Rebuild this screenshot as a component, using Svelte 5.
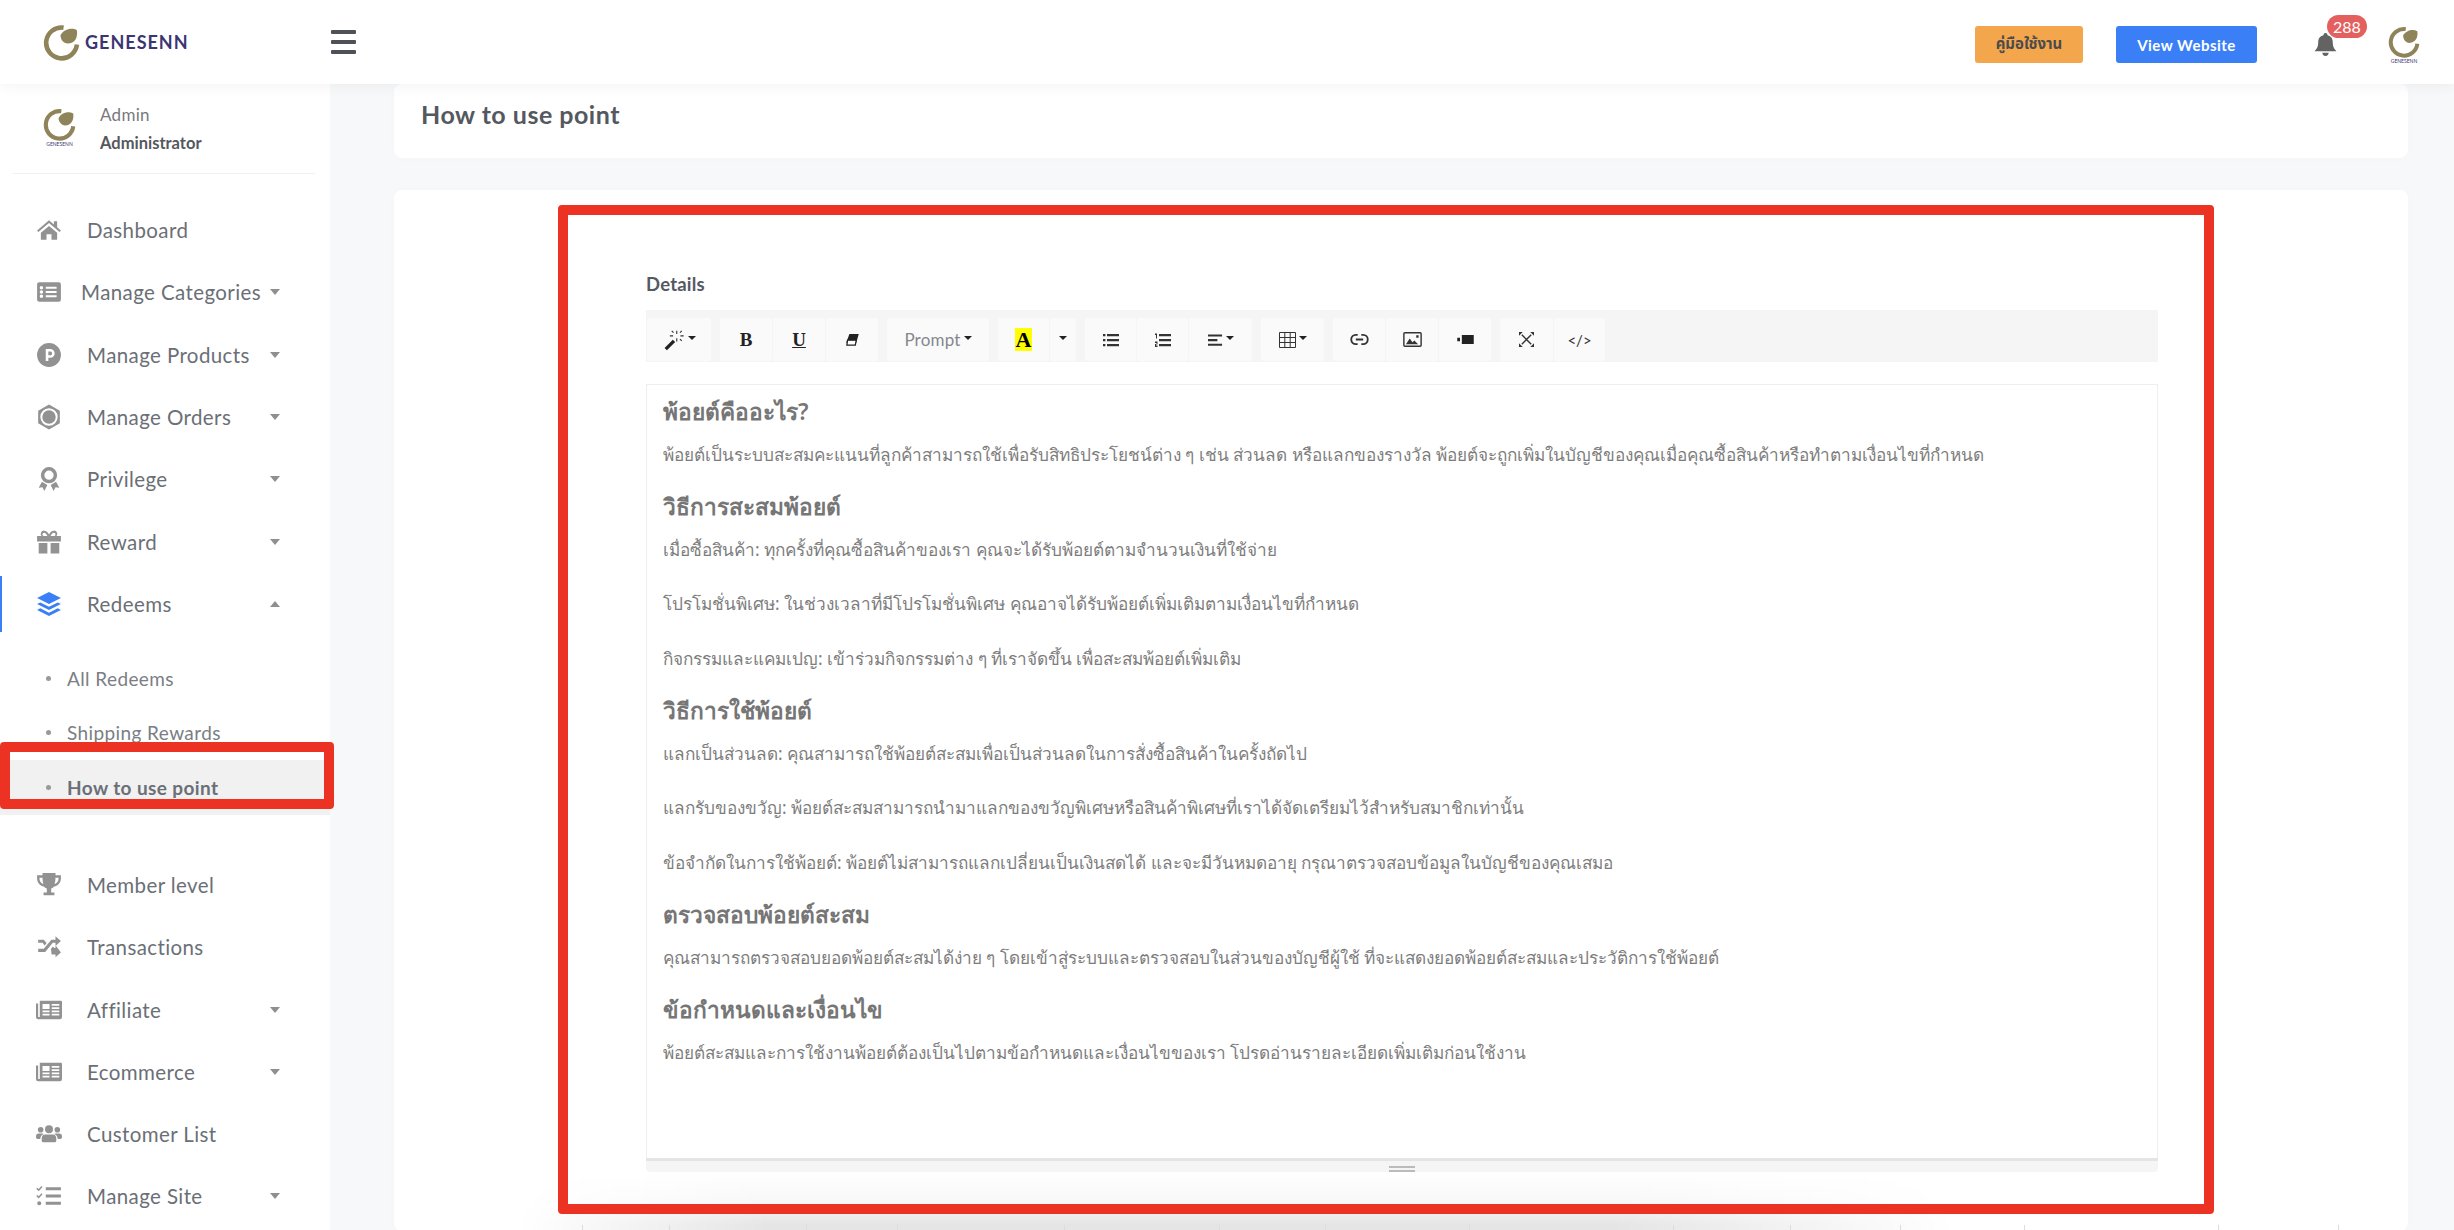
<script>
	const icons = {
		home: 'M12 3 1 12.5l1.2 1.4L12 5.6l9.8 8.3 1.2-1.4-3.5-3V4h-3v2.9zM4.5 14.6V21h5.2v-5h4.6v5h5.2v-6.4L12 8.2z',
		list: 'M3 3h18a2 2 0 0 1 2 2v14a2 2 0 0 1-2 2H3a2 2 0 0 1-2-2V5a2 2 0 0 1 2-2zm2 3.5a1.6 1.6 0 1 0 0 3.2 1.6 1.6 0 0 0 0-3.2zm4 .6v2h10v-2zM5 10.4a1.6 1.6 0 1 0 0 3.2 1.6 1.6 0 0 0 0-3.2zm4 .6v2h10v-2zm-4 3.3a1.6 1.6 0 1 0 0 3.2 1.6 1.6 0 0 0 0-3.2zm4 .6v2h10v-2z',
		point: 'M12 1a11 11 0 1 0 0 22 11 11 0 0 0 0-22zM9 6.5h4.2a4 4 0 0 1 0 8H11.400v3H9zm2.400 2.300v3.400h1.800a1.700 1.700 0 0 0 0-3.400z',
		orders: 'M12 .5 22 6.200v11.600L12 23.500 2 17.800V6.200zM12 4a8 8 0 1 0 0 16 8 8 0 0 0 0-16zm0 1.800a6.200 6.200 0 1 1 0 12.400 6.200 6.200 0 0 1 0-12.400z',
		award: 'M12 1a7.500 7.500 0 1 0 0 15 7.500 7.500 0 0 0 0-15zm0 3.200a4.300 4.300 0 1 1 0 8.600 4.300 4.300 0 0 1 0-8.600zM5.500 14.500 2.500 20l3.500-.3L7.700 23l2.800-5.500zm13 0L21.500 20l-3.500-.3-1.700 3.300-2.800-5.500z',
		gift: 'M7.500 1.500c2 0 3.500 1.500 4.500 3.500 1-2 2.500-3.500 4.500-3.500a3 3 0 0 1 2.400 5H23v5H1v-5h4.100a3 3 0 0 1 2.400-5zm0 2a1 1 0 0 0 0 3h3c-.700-1.500-1.700-3-3-3zm9 0c-1.300 0-2.300 1.500-3 3h3a1 1 0 0 0 0-3zM2.500 13h8v9.500h-8zm11 0h8v9.500h-8z',
		layers: 'M12 1 1 6.500 12 12l11-5.500zM4 10.500 1 12l11 5.500L23 12l-3-1.500-8 4zm0 5.500-3 1.500L12 23l11-5.500-3-1.500-8 4z',
		trophy: 'M6 1h12v2h5v3c0 4-3 7-6.500 7.500-.8.900-1.700 1.500-2.500 1.800V19h3v2.500H7V19h3v-3.700c-.8-.3-1.700-.900-2.500-1.800C4 13 1 10 1 6V3h5zM3.200 5.200V6c0 2.500 1.500 4.300 3.600 5-.5-1.700-.8-3.700-.8-5.800zm17.600 0H18c0 2.100-.3 4.100-.8 5.800 2.100-.7 3.600-2.500 3.600-5z',
		random: 'M18 2l5 4.500L18 11V8h-2.500l-7 8.500H2v-2.800h5.200l7-8.500H18zM2 5.200h5.200l2.600 3.200-1.800 2.200L6 8H2zm11.800 8.600 1.800-2.200 1.400 1.400h1v-2.700L23 17l-5 4.500V19h-3.600z',
		paper: 'M3.500 3.500h19.500A1 1 0 0 1 24 4.500v14a2 2 0 0 1-2 2H2a2 2 0 0 1-2-2V6h2v12.500h1.500zm2.500 3v4.500h6.500V6.500zm8.500 0V8h7V6.500zm0 3V11h7V9.500zM6 12.500V14h6.500v-1.500zm8.500 0V14h7v-1.500zM6 15.500V17h6.500v-1.500zm8.500 0V17h7v-1.500z',
		users: 'M12 4a3.700 3.700 0 1 1 0 7.400A3.700 3.700 0 0 1 12 4zM4.300 5.500a2.600 2.600 0 1 1 0 5.200 2.600 2.600 0 0 1 0-5.200zm15.400 0a2.600 2.600 0 1 1 0 5.200 2.600 2.600 0 0 1 0-5.200zM8.500 12.500h7c2 0 3.200 1.500 3.200 3.500v2.500a1 1 0 0 1-1 1H6.300a1 1 0 0 1-1-1V16c0-2 1.200-3.500 3.200-3.500zM2.500 11.500h3.300c.5 0 .9.100 1.300.4-1.800.7-3 2.200-3.200 4.600H1.500a1.500 1.500 0 0 1-1.500-1.500V14c0-1.500 1-2.500 2.500-2.500zm15.700 0h3.300c1.500 0 2.500 1 2.500 2.500v1c0 .8-.7 1.500-1.500 1.500h-2.400c-.2-2.400-1.400-3.900-3.200-4.600.4-.3.800-.4 1.300-.4z',
		tasks: 'M9 4h14v2.600H9zm0 6.700h14v2.600H9zm0 6.700h14V20H9zM1.200 4.300 2.500 5.500 5 2.800l1 .9-3.500 3.800L.2 5.300zm0 6.700 1.300 1.200L5 9.500l1 .9-3.500 3.800-2.300-2.200zM3 16.800a1.900 1.900 0 1 1 0 3.800 1.900 1.900 0 0 1 0-3.800z'
	};

	const topNav = [
		{ label: 'Dashboard', icon: 'home' },
		{ label: 'Manage Categories', icon: 'list', caret: 'down', tight: true },
		{ label: 'Manage Products', icon: 'point', caret: 'down' },
		{ label: 'Manage Orders', icon: 'orders', caret: 'down' },
		{ label: 'Privilege', icon: 'award', caret: 'down' },
		{ label: 'Reward', icon: 'gift', caret: 'down' },
		{ label: 'Redeems', icon: 'layers', caret: 'up', active: true }
	];
	const subNav = [
		{ label: 'All Redeems' },
		{ label: 'Shipping Rewards' },
		{ label: 'How to use point', current: true }
	];
	const bottomNav = [
		{ label: 'Member level', icon: 'trophy' },
		{ label: 'Transactions', icon: 'random' },
		{ label: 'Affiliate', icon: 'paper', caret: 'down' },
		{ label: 'Ecommerce', icon: 'paper', caret: 'down' },
		{ label: 'Customer List', icon: 'users' },
		{ label: 'Manage Site', icon: 'tasks', caret: 'down' }
	];

	const content = [
		{ h: 'พ้อยต์คืออะไร?' },
		{ p: 'พ้อยต์เป็นระบบสะสมคะแนนที่ลูกค้าสามารถใช้เพื่อรับสิทธิประโยชน์ต่าง ๆ เช่น ส่วนลด หรือแลกของรางวัล พ้อยต์จะถูกเพิ่มในบัญชีของคุณเมื่อคุณซื้อสินค้าหรือทำตามเงื่อนไขที่กำหนด' },
		{ h: 'วิธีการสะสมพ้อยต์' },
		{ p: 'เมื่อซื้อสินค้า: ทุกครั้งที่คุณซื้อสินค้าของเรา คุณจะได้รับพ้อยต์ตามจำนวนเงินที่ใช้จ่าย' },
		{ p: 'โปรโมชั่นพิเศษ: ในช่วงเวลาที่มีโปรโมชั่นพิเศษ คุณอาจได้รับพ้อยต์เพิ่มเติมตามเงื่อนไขที่กำหนด' },
		{ p: 'กิจกรรมและแคมเปญ: เข้าร่วมกิจกรรมต่าง ๆ ที่เราจัดขึ้น เพื่อสะสมพ้อยต์เพิ่มเติม' },
		{ h: 'วิธีการใช้พ้อยต์' },
		{ p: 'แลกเป็นส่วนลด: คุณสามารถใช้พ้อยต์สะสมเพื่อเป็นส่วนลดในการสั่งซื้อสินค้าในครั้งถัดไป' },
		{ p: 'แลกรับของขวัญ: พ้อยต์สะสมสามารถนำมาแลกของขวัญพิเศษหรือสินค้าพิเศษที่เราได้จัดเตรียมไว้สำหรับสมาชิกเท่านั้น' },
		{ p: 'ข้อจำกัดในการใช้พ้อยต์: พ้อยต์ไม่สามารถแลกเปลี่ยนเป็นเงินสดได้ และจะมีวันหมดอายุ กรุณาตรวจสอบข้อมูลในบัญชีของคุณเสมอ' },
		{ h: 'ตรวจสอบพ้อยต์สะสม' },
		{ p: 'คุณสามารถตรวจสอบยอดพ้อยต์สะสมได้ง่าย ๆ โดยเข้าสู่ระบบและตรวจสอบในส่วนของบัญชีผู้ใช้ ที่จะแสดงยอดพ้อยต์สะสมและประวัติการใช้พ้อยต์' },
		{ h: 'ข้อกำหนดและเงื่อนไข' },
		{ p: 'พ้อยต์สะสมและการใช้งานพ้อยต์ต้องเป็นไปตามข้อกำหนดและเงื่อนไขของเรา โปรดอ่านรายละเอียดเพิ่มเติมก่อนใช้งาน' }
	];

	// faint column rules of the next section peeking in under the card
	const peekRules = [582, 669, 806, 897, 1064, 1219, 1325, 1469, 1673, 1790, 1900, 2024, 2218, 2338];
</script>

{#snippet logoMark(size)}
	<svg width={size} height={size} viewBox="0 0 36 36">
		<path d="M20 3.500A15 15 0 1 0 33 20" fill="none" stroke="#8f8459" stroke-width="4.500" />
		<path d="M17 11c3-6 11-8 16-5 1 7-2 13-9 13-4 0-7-4-7-8z" fill="#8f8459" />
	</svg>
{/snippet}

{#snippet navRow(item)}
	<a class="nav-row" class:active={item.active} class:tight={item.tight}>
		<svg class="nav-icon" viewBox="0 0 24 24"><path d={icons[item.icon]} fill-rule="evenodd" /></svg>
		<span class="nav-label">{item.label}</span>
		{#if item.caret}<i class="caret {item.caret}"></i>{/if}
	</a>
{/snippet}

<div class="page">
	<header>
		<div class="brand">
			{@render logoMark(37)}
			<span class="brand-name">GENESENN</span>
		</div>
		<button class="burger" aria-label="menu"><i></i><i></i><i></i></button>
		<div class="top-right">
			<button class="btn orange">คู่มือใช้งาน</button>
			<button class="btn blue">View Website</button>
			<div class="bell">
				<svg viewBox="0 0 24 24" width="25" height="27"><path d="M12 1a2 2 0 0 1 2 2c3.500.8 5 3.500 5 7 0 5 2 6.500 3.500 8.500H1.500C3 16.500 5 15 5 10c0-3.500 1.500-6.200 5-7a2 2 0 0 1 2-2zM9 20h6a3 3 0 0 1-6 0z" fill="#636363" /></svg>
				<span class="badge">288</span>
			</div>
			<div class="mini-logo">
				{@render logoMark(32)}
				<span>GENESENN</span>
			</div>
		</div>
	</header>

	<div class="body">
		<aside>
			<div class="profile">
				<div class="mini-logo profile-logo">
					{@render logoMark(33)}
					<span>GENESENN</span>
				</div>
				<div class="who">
					<span class="who-name">Admin</span>
					<strong>Administrator</strong>
				</div>
			</div>

			<nav>
				{#each topNav as item}
					{@render navRow(item)}
				{/each}
				<div class="sub">
					{#each subNav as item}
						<a class="sub-row" class:current={item.current}><i></i>{item.label}</a>
					{/each}
				</div>
				{#each bottomNav as item}
					{@render navRow(item)}
				{/each}
			</nav>
		</aside>

		<main>
			<section class="card title-card"><h1>How to use point</h1></section>
			<section class="card form-card">
				<label for="editor">Details</label>
				<div class="toolbar">
					<div class="group"><button class="tool w64"><svg viewBox="0 0 24 24" width="22" height="22"><path d="M3 22 12 13" stroke="#222" stroke-width="3.600" /><path d="M15 2v3.500M15 10v3.500M7.500 7.500h3.500M19 7.500h3.500M9.500 2l2 2M20.500 2l-2 2M20.500 13l-2-2" stroke="#333" stroke-width="1.200" fill="none" /></svg><i class="dd"></i></button></div>
					<div class="group">
						<button class="tool serif">B</button>
						<button class="tool serif under">U</button>
						<button class="tool"><svg viewBox="0 0 24 24" width="15" height="15"><path d="M7 3h15l-4 14H2z" fill="#222" /><path d="M4 13h14l-1.500 8H3z" fill="#fff" stroke="#222" stroke-width="2" /></svg></button>
					</div>
					<div class="group"><button class="tool prompt">Prompt<i class="dd"></i></button></div>
					<div class="group">
						<button class="tool w51"><span class="hl">A</span></button>
						<button class="tool w26"><i class="dd"></i></button>
					</div>
					<div class="group">
						<button class="tool w51"><svg viewBox="0 0 16 14" width="16" height="14"><path d="M0 1h2.400v2.200H0zM4 1h12v2.200H4zM0 6h2.400v2.200H0zM4 6h12v2.200H4zM0 11h2.400v2.200H0zM4 11h12v2.200H4z" fill="#333" /></svg></button>
						<button class="tool w51"><svg viewBox="0 0 16 14" width="16" height="14"><path d="M0 .5h2v5H1V2H0zM4 1h12v2.200H4zM4 6h12v2.200H4zM0 8.500h2.500v3H1v1h1.500V14H0v-3h1.500v-1H0zM4 11h12v2.200H4z" fill="#333" /></svg></button>
						<button class="tool w63"><svg viewBox="0 0 16 14" width="15" height="14"><path d="M0 1h15v2.200H0zM0 6h10v2.200H0zM0 11h15v2.200H0z" fill="#333" /></svg><i class="dd"></i></button>
					</div>
					<div class="group"><button class="tool w63"><svg viewBox="0 0 17 16" width="17" height="16"><path d="M.5.500h16v15H.500zM5.800.5v15M11.200.5v15M.5 5.500h16M.5 10.500h16" fill="none" stroke="#333" /></svg><i class="dd"></i></button></div>
					<div class="group">
						<button class="tool"><svg viewBox="0 0 20 12" width="19" height="11"><path d="M8 1H6a5 5 0 0 0 0 10h2M12 1h2a5 5 0 0 1 0 10h-2M6 6h8" fill="none" stroke="#333" stroke-width="2" /></svg></button>
						<button class="tool"><svg viewBox="0 0 20 16" width="19" height="15"><rect x=".8" y=".8" width="18.400" height="14.400" rx="1" fill="none" stroke="#333" stroke-width="1.500" /><path d="M3 13l4-6 3 4 2-2 4 4zM14 3.500h2.500V6H14z" fill="#333" /></svg></button>
						<button class="tool"><svg viewBox="0 0 18 12" width="17" height="11"><path d="M5 1h13v10H5zM0 4h3v4H0z" fill="#222" /></svg></button>
					</div>
					<div class="group">
						<button class="tool w53"><svg viewBox="0 0 16 16" width="15" height="15"><path d="M3 3l10 10M13 3 3 13" stroke="#333" stroke-width="1.500" /><path d="M0 0h4L0 4zM16 0v4l-4-4zM0 16v-4l4 4zM16 16h-4l4-4z" fill="#333" /></svg></button>
						<button class="tool w51 code">&lt;/&gt;</button>
					</div>
				</div>
				<div class="editor" id="editor">
					{#each content as block}
						{#if block.h}<h3>{block.h}</h3>{:else}<p>{block.p}</p>{/if}
					{/each}
				</div>
				<div class="resize"><i></i><i></i></div>
			</section>
		</main>
	</div>

	<div class="scroll-shade"></div>
	{#each peekRules as x}
		<i class="peek-rule" style="left: {x}px"></i>
	{/each}
	<div class="mark mark-side"></div>
	<div class="mark mark-main"></div>
</div>

<style>
	:global(body) {
		margin: 0;
	}

	.page {
		position: relative;
		width: 2454px;
		height: 1230px;
		overflow: hidden;
		background: #f7f8fa;
		font-family: 'Lato', 'Noto Sans', 'Noto Sans Thai', sans-serif;
		color: #6b6f76;
	}

	header {
		position: relative;
		z-index: 3;
		display: flex;
		align-items: center;
		height: 84px;
		background: #fff;
		box-shadow: 0 2px 14px rgba(0, 0, 0, 0.05);
	}

	.brand {
		display: flex;
		align-items: center;
		gap: 5px;
		width: 331px;
		padding-left: 43px;
		box-sizing: border-box;
	}

	.brand-name {
		font-size: 18px;
		font-weight: 700;
		letter-spacing: 1px;
		color: #3b3672;
	}

	.burger {
		display: flex;
		flex-direction: column;
		gap: 6px;
		padding: 0;
		border: 0;
		background: none;
	}

	.burger i {
		display: block;
		width: 25px;
		height: 4px;
		border-radius: 1px;
		background: #4e5158;
	}

	.top-right {
		display: flex;
		align-items: center;
		margin-left: auto;
		padding: 5px 34px 0 0;
	}

	.btn {
		height: 37px;
		border: 0;
		border-radius: 3px;
		font-family: inherit;
		font-size: 15px;
		font-weight: 700;
	}

	.orange {
		width: 108px;
		margin-right: 33px;
		background: #f4a64d;
		color: #4b4b4b;
	}

	.blue {
		width: 141px;
		margin-right: 56px;
		background: #3a7ff6;
		color: #fff;
		letter-spacing: 0.5px;
	}

	.bell {
		position: relative;
		width: 25px;
		height: 27px;
		margin-right: 50px;
	}

	.badge {
		position: absolute;
		left: 14px;
		top: -16px;
		padding: 2px 6px;
		border-radius: 12px;
		background: #e4605f;
		color: #fff;
		font-size: 16px;
		line-height: 19px;
	}

	.mini-logo {
		display: flex;
		flex-direction: column;
		align-items: center;
	}

	.mini-logo span {
		font-size: 5px;
		line-height: 6px;
		color: #3b3672;
	}

	.body {
		display: flex;
		height: 1146px;
	}

	aside {
		flex: none;
		width: 330px;
		background: #fff;
	}

	.profile {
		display: flex;
		align-items: flex-start;
		gap: 24px;
		height: 90px;
		margin: 0 15px 0 12px;
		padding: 20px 0 0 31px;
		box-sizing: border-box;
		border-bottom: 1px solid #f1f1f1;
	}

	.profile-logo {
		padding-top: 4px;
	}

	.who {
		display: flex;
		flex-direction: column;
		gap: 8px;
		font-size: 17px;
	}

	.who-name {
		line-height: 21px;
		color: #77797e;
		letter-spacing: 0.3px;
	}

	.who strong {
		font-size: 16.500px;
		line-height: 20px;
		color: #55585e;
	}

	nav {
		padding-top: 25px;
	}

	.nav-row {
		display: flex;
		align-items: center;
		height: 62.3px;
		padding-left: 36px;
		box-sizing: border-box;
		font-size: 20.500px;
		letter-spacing: 0.4px;
		color: #6b6f76;
	}

	.nav-row.active {
		position: relative;
	}

	.nav-row.active::before {
		content: '';
		position: absolute;
		left: 0;
		top: 3px;
		bottom: 3px;
		width: 2px;
		background: #3a7ff6;
	}

	.nav-icon {
		flex: none;
		width: 26px;
		height: 26px;
		fill: #929292;
	}

	.active .nav-icon {
		fill: #3a7ff6;
	}

	.nav-label {
		margin-left: 25px;
	}

	.tight .nav-label {
		margin-left: 19px;
	}

	.caret {
		position: absolute;
		left: 270px;
		width: 0;
		height: 0;
		border-left: 5.5px solid transparent;
		border-right: 5.5px solid transparent;
	}

	.caret.down {
		border-top: 6px solid #8f8f8f;
	}

	.caret.up {
		border-bottom: 6px solid #8f8f8f;
	}

	.sub {
		padding: 16px 0 39px;
	}

	.sub-row {
		display: flex;
		align-items: center;
		gap: 16px;
		height: 54.6px;
		padding-left: 46px;
		box-sizing: border-box;
		font-size: 19px;
		letter-spacing: 0.4px;
		color: #7b7e84;
	}

	.sub-row i {
		width: 5px;
		height: 5px;
		border-radius: 50%;
		background: #999;
	}

	.sub-row.current {
		background: #f1f1f1;
		font-weight: 700;
		color: #6b6f76;
	}

	main {
		flex: 1;
		padding: 0 46px 0 64px;
	}

	.card {
		background: #fff;
		border-radius: 8px;
		box-shadow: 0 1px 8px rgba(0, 0, 0, 0.015);
	}

	.title-card {
		height: 74px;
		margin-bottom: 32px;
		padding: 15px 27px;
		box-sizing: border-box;
	}

	h1 {
		margin: 0;
		font-size: 25px;
		line-height: 30px;
		font-weight: 700;
		letter-spacing: 0.5px;
		color: #54585f;
	}

	.form-card {
		height: 1041px;
		padding: 83px 250px 0 252px;
		box-sizing: border-box;
	}

	label {
		display: block;
		height: 37px;
		font-size: 18.500px;
		line-height: 22px;
		font-weight: 700;
		letter-spacing: 0.2px;
		color: #555962;
	}

	.toolbar {
		display: flex;
		gap: 9px;
		height: 52px;
		padding: 8px 0 1px 1px;
		box-sizing: border-box;
		background: #f5f5f5;
	}

	.group {
		display: flex;
		gap: 1px;
	}

	.tool {
		display: flex;
		align-items: center;
		justify-content: center;
		gap: 3px;
		width: 52px;
		height: 43px;
		padding: 0;
		border: 0;
		border-radius: 3px;
		background: #fafafa;
		color: #222;
		font-family: inherit;
	}

	.w64 { width: 64px; }
	.w51 { width: 51px; }
	.w53 { width: 53px; }
	.w63 { width: 63px; }
	.w26 { width: 26px; }

	.serif {
		font-family: 'Liberation Serif', serif;
		font-size: 19px;
		font-weight: 700;
	}

	.under {
		text-decoration: underline;
	}

	.prompt {
		width: 102px;
		font-size: 17px;
		letter-spacing: 0.2px;
		color: #85888d;
	}

	.hl {
		padding: 2px 1px;
		background: #ff0;
		color: #000;
		font-family: 'Liberation Serif', serif;
		font-size: 22px;
		font-weight: 700;
		line-height: 19px;
	}

	.code {
		font-size: 15px;
		color: #333;
	}

	.dd {
		width: 0;
		height: 0;
		margin-bottom: 3px;
		border-left: 4px solid transparent;
		border-right: 4px solid transparent;
		border-top: 4px solid #222;
	}

	.editor {
		height: 774px;
		margin-top: 22px;
		padding: 14px 17px 0 16px;
		box-sizing: border-box;
		border: 1px solid #eee;
		border-bottom: 0;
		overflow: hidden;
		font-family: 'Noto Sans', sans-serif;
	}

	h3 {
		margin: 0 0 18px;
		font-size: 22.700px;
		line-height: 26px;
		font-weight: 600;
		color: #767676;
	}

	p {
		margin: 0 0 31.700px;
		font-size: 17.200px;
		line-height: 23px;
		color: #7d7d7d;
	}

	p:has(+ h3) {
		margin-bottom: 27.700px;
	}

	.resize {
		display: flex;
		flex-direction: column;
		align-items: center;
		gap: 2px;
		height: 14px;
		padding-top: 5px;
		box-sizing: border-box;
		border-top: 3px solid #e4e4e4;
		border-radius: 0 0 4px 4px;
		background: #f5f5f5;
	}

	.resize i {
		width: 26px;
		height: 3px;
		background: #bbb;
	}

	.scroll-shade {
		position: absolute;
		left: 394px;
		top: 1172px;
		width: 1560px;
		height: 58px;
		background: linear-gradient(to top, rgba(0, 0, 0, 0.1) 10%, rgba(0, 0, 0, 0.03) 45%, transparent);
		-webkit-mask-image: linear-gradient(to right, transparent 8%, #000 24%, #000 78%, transparent);
		mask-image: linear-gradient(to right, transparent 8%, #000 24%, #000 78%, transparent);
	}

	.peek-rule {
		position: absolute;
		top: 1225px;
		width: 1px;
		height: 5px;
		background: #dcdcdc;
	}

	.mark {
		position: absolute;
		z-index: 4;
		box-sizing: border-box;
		border: 10px solid #ec3323;
		border-radius: 4px;
	}

	.mark-side {
		left: 0;
		top: 742px;
		width: 334px;
		height: 67px;
	}

	.mark-main {
		left: 558px;
		top: 205px;
		width: 1656px;
		height: 1009px;
	}
</style>
